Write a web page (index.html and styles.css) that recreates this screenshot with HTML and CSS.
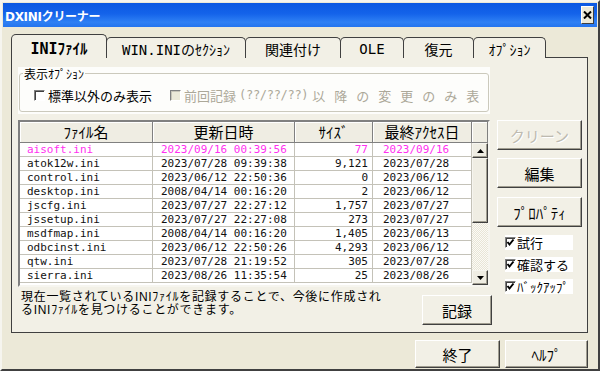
FILE: index.html
```html
<!DOCTYPE html>
<html lang="ja">
<head>
    <meta charset="UTF-8">
    <meta name="viewport" content="width=device-width, initial-scale=1.0">
    <title>DXINIクリーナー</title>
    <link rel="stylesheet" href="styles.css">
</head>
<body>
    <div class="window">
        <div class="titlebar">
            <span class="title">DXINIクリーナー</span>
            <span class="close-btn">
                <svg width="9" height="8" viewBox="0 0 9 8"><path d="M1 0.5 L8 7.5 M8 0.5 L1 7.5" stroke="#000" stroke-width="2"/></svg>
            </span>
        </div>

        <div class="tabs">
            <div class="tab selected">INIﾌｧｲﾙ</div>
            <div class="tab tab-win">WIN.INIのｾｸｼｮﾝ</div>
            <div class="tab tab-assoc">関連付け</div>
            <div class="tab tab-ole">OLE</div>
            <div class="tab tab-restore">復元</div>
            <div class="tab tab-option">ｵﾌﾟｼｮﾝ</div>
        </div>

        <div class="panel">
            <div class="optgroup">
                <fieldset>
                    <legend>表示ｵﾌﾟｼｮﾝ</legend>
                    <div class="checks">
                        <label class="check"><span class="box"></span>標準以外のみ表示</label>
                        <label class="check disabled"><span class="box"></span>前回記録<span class="mono">(??/??/??)</span><span class="wide">以降の変更のみ表示</span></label>
                    </div>
                </fieldset>
            </div>

            <div class="main">
                <div class="left">
                    <div class="list">
                        <div class="list-head">
                            <div class="hcell">ﾌｧｲﾙ名</div>
                            <div class="hcell">更新日時</div>
                            <div class="hcell">ｻｲｽﾞ</div>
                            <div class="hcell">最終ｱｸｾｽ日</div>
                            <div class="hcell"></div>
                        </div>
                        <div class="list-body">
                            <div class="rows">
                                <div class="row new"><span>aisoft.ini</span><span>2023/09/16 00:39:56</span><span class="num">77</span><span>2023/09/16</span></div>
                                <div class="row"><span>atok12w.ini</span><span>2023/07/28 09:39:38</span><span class="num">9,121</span><span>2023/07/28</span></div>
                                <div class="row"><span>control.ini</span><span>2023/06/12 22:50:36</span><span class="num">0</span><span>2023/06/12</span></div>
                                <div class="row"><span>desktop.ini</span><span>2008/04/14 00:16:20</span><span class="num">2</span><span>2023/06/12</span></div>
                                <div class="row"><span>jscfg.ini</span><span>2023/07/27 22:27:12</span><span class="num">1,757</span><span>2023/07/27</span></div>
                                <div class="row"><span>jssetup.ini</span><span>2023/07/27 22:27:08</span><span class="num">273</span><span>2023/07/27</span></div>
                                <div class="row"><span>msdfmap.ini</span><span>2008/04/14 00:16:20</span><span class="num">1,405</span><span>2023/06/13</span></div>
                                <div class="row"><span>odbcinst.ini</span><span>2023/06/12 22:50:26</span><span class="num">4,293</span><span>2023/06/12</span></div>
                                <div class="row"><span>qtw.ini</span><span>2023/07/28 21:19:52</span><span class="num">305</span><span>2023/07/28</span></div>
                                <div class="row"><span>sierra.ini</span><span>2023/08/26 11:35:54</span><span class="num">25</span><span>2023/08/26</span></div>
                            </div>
                            <div class="scrollbar">
                                <div class="sb-btn"><svg width="7" height="4" viewBox="0 0 7 4"><polygon points="0,4 3.5,0 7,4" fill="#000"/></svg></div>
                                <div class="sb-thumb"></div>
                                <div class="sb-track"></div>
                                <div class="sb-btn"><svg width="7" height="4" viewBox="0 0 7 4"><polygon points="0,0 7,0 3.5,4" fill="#000"/></svg></div>
                            </div>
                        </div>
                    </div>

                    <div class="desc-row">
                        <p class="desc">現在一覧されているINIﾌｧｲﾙを記録することで、今後に作成され<br>るINIﾌｧｲﾙを見つけることができます。</p>
                        <button class="btn btn-record">記録</button>
                    </div>
                </div>

                <div class="side">
                    <button class="btn" disabled>クリーン</button>
                    <button class="btn btn-edit">編集</button>
                    <button class="btn btn-prop">ﾌﾟﾛﾊﾟﾃｨ</button>
                    <label class="side-check first"><span class="box on"><svg width="9" height="9" viewBox="0 0 9 9"><path d="M1.5 4 L3.5 6.5 L7.5 1.5" stroke="#000" stroke-width="2" fill="none"/></svg></span>試行</label>
                    <label class="side-check"><span class="box on"><svg width="9" height="9" viewBox="0 0 9 9"><path d="M1.5 4 L3.5 6.5 L7.5 1.5" stroke="#000" stroke-width="2" fill="none"/></svg></span>確認する</label>
                    <label class="side-check"><span class="box on"><svg width="9" height="9" viewBox="0 0 9 9"><path d="M1.5 4 L3.5 6.5 L7.5 1.5" stroke="#000" stroke-width="2" fill="none"/></svg></span>ﾊﾞｯｸｱｯﾌﾟ</label>
                </div>
            </div>
        </div>

        <div class="footer">
            <button class="btn btn-exit">終了</button>
            <button class="btn btn-help">ﾍﾙﾌﾟ</button>
        </div>
    </div>
</body>
</html>
```

FILE: styles.css
```css
* {
    box-sizing: border-box;
}
body {
    margin: 0;
    background-color: #ece9d8;
    font-family: "Noto Sans CJK JP", sans-serif;
    font-size: 13px;
    color: #000;
}
.window {
    width: 600px;
    height: 371px;
    background-color: #ece9d8;
    border: 2px solid;
    border-color: #f6f5ef #404040 #404040 #f6f5ef;
    overflow: hidden;
}
.titlebar {
    margin: 1px 1px 0 1px;
    height: 24px;
    display: flex;
    align-items: center;
    justify-content: space-between;
    padding: 0 3px 0 2px;
    background: linear-gradient(to bottom, #0b58e2 0%, #1463ea 45%, #2f80f4 80%, #2474ee 100%);
}
.title {
    color: #fff;
    font-family: "DejaVu Sans", "Noto Sans CJK JP", sans-serif;
    font-weight: bold;
    font-size: 12px;
    letter-spacing: -0.3px;
}
.close-btn {
    width: 13px;
    height: 18px;
    display: flex;
    align-items: center;
    justify-content: center;
    background-color: #ece9d8;
    border: 1px solid;
    border-color: #fff #404040 #404040 #fff;
}

/* タブ */
.tabs {
    display: flex;
    align-items: flex-end;
    height: 23px;
    margin-top: 8px;
    margin-bottom: -1px;
    padding-left: 9px;
    font-family: "DejaVu Sans Mono", "Noto Sans CJK JP", monospace;
    font-size: 14px;
}
.tab {
    height: 21px;
    margin-left: -1px;
    border: 1px solid #404040;
    border-bottom: 0;
    border-radius: 5px 5px 0 0;
    background-color: #f2f0e6;
    display: flex;
    align-items: center;
    justify-content: center;
    padding-top: 1px;
}
.tab.selected {
    position: relative;
    z-index: 1;
    height: 24px;
    width: 96px;
    margin-left: 0;
    font-weight: bold;
    font-size: 15px;
    background-color: #f2f0e6;
}
.tab-win { width: 140px; }
.tab-assoc { width: 96px; }
.tab-ole { width: 64px; }
.tab-restore { width: 71px; }
.tab-option { width: 73px; }

.panel {
    margin-left: 9px;
    width: 577px;
    height: 276px;
    border: 1px solid #404040;
    background-color: #f2f0e6;
    padding: 9px 5px 0 6px;
}

/* 表示オプション */
.optgroup {
    width: 472px;
    height: 47px;
    background-color: #fdfdfb;
    padding: 0 1px 2px 1px;
}
.optgroup fieldset {
    margin: 0;
    min-width: 0;
    height: 100%;
    border: 1px solid #cbc9bc;
    border-radius: 3px;
    padding: 5px 0 0 3px;
}
.optgroup legend {
    padding: 0 1px;
    font-size: 12px;
    line-height: 13px;
}
.checks {
    display: flex;
    align-items: center;
    height: 20px;
    padding-left: 11px;
    margin-right: 2px;
    white-space: nowrap;
    overflow: hidden;
}
.check {
    display: flex;
    flex: none;
    align-items: center;
    gap: 3px;
    line-height: 19px;
}
.check.disabled {
    margin-left: 18px;
    color: #aca899;
}
.check .mono {
    font-family: "DejaVu Sans Mono", monospace;
    font-size: 12px;
    letter-spacing: -0.3px;
}
.check .wide {
    margin-left: 1px;
    letter-spacing: 9px;
}
.box {
    width: 11px;
    height: 11px;
    flex: none;
    background-color: #fff;
    border: 1px solid;
    border-color: #808080 #fff #fff #808080;
    box-shadow: inset 1px 1px #404040;
    display: flex;
    align-items: center;
    justify-content: center;
}
.check.disabled .box {
    background-color: #ece9d8;
    box-shadow: inset 1px 1px #c8c5b8;
}

.main {
    display: flex;
    gap: 7px;
    margin-top: 6px;
}
.left {
    width: 472px;
}

/* 一覧 */
.list {
    height: 167px;
    border: 2px solid;
    border-color: #808080 #f6f5ef #f6f5ef #808080;
    background-color: #fff;
}
.list-head {
    display: grid;
    grid-template-columns: 133px 142px 78px 99px 1fr;
    height: 21px;
}
.hcell {
    background-color: #efede3;
    border-right: 1px solid #808080;
    border-bottom: 1px solid #808080;
    box-shadow: inset 1px 1px #fff;
    text-align: center;
    font-size: 15px;
    line-height: 20px;
}
.list-body {
    display: flex;
    height: 142px;
}
.rows {
    flex: 1;
}
.row {
    display: grid;
    grid-template-columns: 133px 142px 78px 99px;
    height: 14px;
    font-family: "DejaVu Sans Mono", monospace;
    font-size: 11px;
    line-height: 13px;
    color: #111;
}
.row span {
    border-right: 1px solid #c4c2b8;
    border-bottom: 1px solid #c4c2b8;
    padding-left: 7px;
    white-space: nowrap;
    overflow: hidden;
}
.row span:nth-child(2) {
    padding-left: 8px;
}
.row span:nth-child(4) {
    padding-left: 10px;
}
.row .num {
    text-align: right;
    padding-right: 4px;
}
.row.new {
    color: #ff30f0;
}
.scrollbar {
    width: 16px;
    display: flex;
    flex-direction: column;
}
.sb-btn, .sb-thumb {
    background-color: #efede3;
    border: 1px solid;
    border-color: #f6f5ef #404040 #404040 #f6f5ef;
    box-shadow: inset -1px -1px #a09d90;
}
.sb-btn {
    height: 15px;
    display: flex;
    align-items: center;
    justify-content: center;
}
.sb-thumb {
    height: 65px;
}
.sb-track {
    flex: 1;
    background: repeating-conic-gradient(#fbfaf6 0 25%, #e8e5d6 0 50%) 0 0 / 2px 2px;
}

.desc-row {
    display: flex;
    justify-content: space-between;
    align-items: flex-start;
}
.desc {
    margin: 4px 0 0 3px;
    font-family: "Liberation Sans", "Noto Sans CJK JP", sans-serif;
    font-size: 12px;
    line-height: 13px;
    letter-spacing: 0.7px;
    white-space: nowrap;
}

/* ボタン */
.btn {
    font-family: "Noto Sans CJK JP", sans-serif;
    font-size: 15px;
    width: 85px;
    height: 30px;
    padding: 0;
    color: #000;
    background-color: #f2f0e6;
    border: 1px solid;
    border-color: #fff #404040 #404040 #fff;
    box-shadow: inset -1px -1px #a09d90;
}
.btn:disabled {
    color: #bdbab0;
    text-shadow: 1px 1px #fff;
}
.btn-record {
    width: 70px;
    margin-top: 8px;
    margin-right: -2px;
}
.side {
    width: 85px;
    display: flex;
    flex-direction: column;
}
.btn-edit {
    margin-top: 8px;
}
.btn-prop {
    margin-top: 9px;
}
.side-check {
    margin: 7px 0 0 8px;
    width: 68px;
    height: 15px;
    background-color: #fff;
    display: flex;
    align-items: center;
    gap: 1px;
    font-size: 13px;
    white-space: nowrap;
}
.side-check.first {
    margin-top: 8px;
}

.footer {
    display: flex;
    justify-content: flex-end;
    gap: 5px;
    margin-top: 7px;
    padding-right: 10px;
}
.btn-exit {
    width: 85px;
    height: 28px;
}
.btn-help {
    width: 83px;
    height: 28px;
}
```
